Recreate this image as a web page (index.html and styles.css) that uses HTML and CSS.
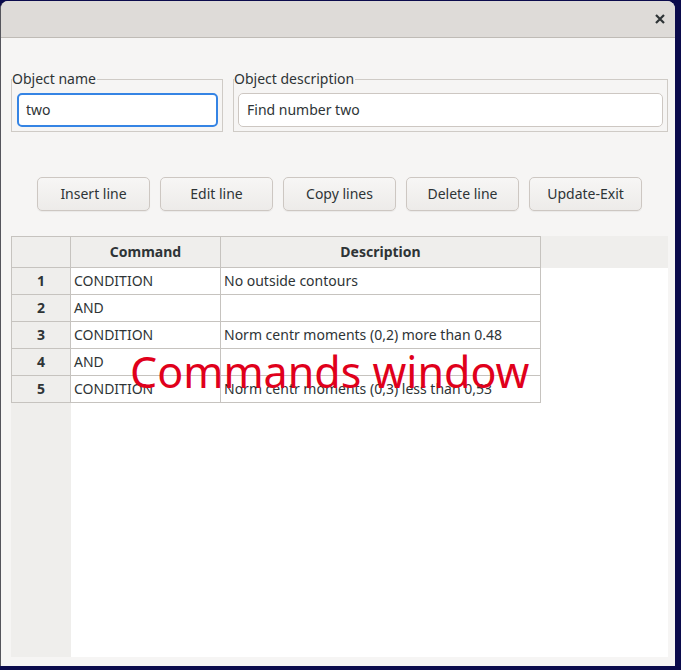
FILE: index.html
```html
<!DOCTYPE html>
<html lang="en">
<head>
<meta charset="utf-8">
<title>Object editor</title>
<link rel="stylesheet" href="styles.css">
</head>
<body>
<div class="window">
  <div class="titlebar">
    <button class="close" aria-label="Close">
      <svg width="10" height="10" viewBox="0 0 10 10"><path d="M1 1 L9 9 M9 1 L1 9" stroke="#2e3436" stroke-width="2.2" stroke-linecap="butt"/></svg>
    </button>
  </div>
  <div class="content">
    <div class="groups">
      <fieldset class="group group-name">
        <legend>Object name</legend>
        <input class="field focused" type="text" value="two">
      </fieldset>
      <fieldset class="group group-desc">
        <legend>Object description</legend>
        <input class="field" type="text" value="Find number two">
      </fieldset>
    </div>
    <div class="buttons">
      <button class="btn">Insert line</button>
      <button class="btn">Edit line</button>
      <button class="btn">Copy lines</button>
      <button class="btn">Delete line</button>
      <button class="btn">Update-Exit</button>
    </div>
    <div class="view">
      <table class="grid">
        <thead>
          <tr>
            <th class="rh"></th>
            <th class="cmd">Command</th>
            <th class="desc">Description</th>
            <th class="fill"></th>
          </tr>
        </thead>
        <tbody>
          <tr><th class="rh">1</th><td class="cmd">CONDITION</td><td class="desc">No outside contours</td><td class="fill"></td></tr>
          <tr><th class="rh">2</th><td class="cmd">AND</td><td class="desc"></td><td class="fill"></td></tr>
          <tr><th class="rh">3</th><td class="cmd">CONDITION</td><td class="desc">Norm centr moments (0,2) more than 0.48</td><td class="fill"></td></tr>
          <tr><th class="rh">4</th><td class="cmd">AND</td><td class="desc"></td><td class="fill"></td></tr>
          <tr><th class="rh">5</th><td class="cmd">CONDITION</td><td class="desc">Norm centr moments (0,3) less than 0,53</td><td class="fill"></td></tr>
        </tbody>
      </table>
      <div class="annotation">Commands window</div>
    </div>
  </div>
</div>
</body>
</html>
```

FILE: styles.css
```css
* { box-sizing: border-box; }

html, body {
  margin: 0;
  padding: 0;
}

body {
  background: #0b0b4c;
  width: 681px;
  height: 670px;
  overflow: hidden;
  font-family: "Noto Sans", "DejaVu Sans", sans-serif;
  font-size: 14px;
  color: #2e3436;
}

.window {
  width: 675px;
  height: 665px;
  margin-top: 1px;
  border-left: 1px solid #55555c;
  border-radius: 8px 8px 0 0;
  background: #f6f5f4;
  display: flex;
  flex-direction: column;
  overflow: hidden;
}

.titlebar {
  height: 37px;
  flex: none;
  background: #dedbd8;
  border-bottom: 1px solid #bfbbb6;
  display: flex;
  justify-content: flex-end;
  align-items: center;
  padding-right: 3px;
}

.close {
  width: 24px;
  height: 24px;
  border: 0;
  background: transparent;
  padding: 0;
  display: flex;
  align-items: center;
  justify-content: center;
}

.content {
  flex: 1;
  display: flex;
  flex-direction: column;
  padding: 33px 7px 9px 10px;
  min-height: 0;
}

.groups {
  display: flex;
  gap: 10px;
}

.group {
  margin: 0;
  border: 1px solid #cfcbc6;
  padding: 5px 4px 4px 5px;
  min-width: 0;
}

.group-name { width: 212px; }
.group-desc { width: 435px; padding-left: 4px; }

.group legend {
  padding: 0 1px 2px 0;
  margin-left: -5px;
  line-height: 15px;
  font-size: 14px;
  color: #2e3436;
}
.group-desc legend { margin-left: -4px; }

.field {
  display: block;
  width: 100%;
  height: 34px;
  border: 1px solid #cdc7c2;
  border-radius: 5px;
  background: #ffffff;
  font-family: "Noto Sans", "DejaVu Sans", sans-serif;
  font-size: 14px;
  color: #2e3436;
  padding: 0 8px 2px;
  outline: none;
}

.field.focused {
  border: 2px solid #3584e4;
  padding: 0 7px 2px;
}

.buttons {
  display: flex;
  gap: 10px;
  margin-top: 45px;
  padding-left: 26px;
}

.btn {
  width: 113px;
  height: 34px;
  border: 1px solid #cdc7c2;
  border-radius: 5px;
  background: linear-gradient(#f7f6f5, #edebe9);
  box-shadow: 0 1px 1px rgba(0, 0, 0, 0.05);
  font-family: "Noto Sans", "DejaVu Sans", sans-serif;
  font-size: 14px;
  color: #2e3436;
  padding: 0 0 2px;
}

.view {
  position: relative;
  margin-top: 25px;
  flex: 1;
  background: linear-gradient(to right, #efeeec 0 60px, #ffffff 60px);
  overflow: hidden;
}

.grid {
  table-layout: fixed;
  border-collapse: separate;
  border-spacing: 0;
  width: 657px;
}

.grid th,
.grid td {
  height: 27px;
  padding: 0 3px 2px;
  border-right: 1px solid #c6c3bf;
  border-bottom: 1px solid #c6c3bf;
  font-size: 14px;
  font-weight: normal;
  text-align: left;
  white-space: nowrap;
  overflow: visible;
  color: #2e3436;
}

.grid thead th {
  height: 32px;
  border-top: 1px solid #c6c3bf;
  background: #efeeec;
  font-weight: bold;
  text-align: center;
}

.grid .rh {
  width: 60px;
  border-left: 1px solid #c6c3bf;
  background: #efeeec;
  font-weight: bold;
  text-align: center;
}

.grid .cmd { width: 150px; }
.grid .desc { width: 320px; }

.grid .fill {
  width: 127px;
  border: 0;
  background: transparent;
}

.grid thead th.fill {
  border: 0;
  background: #efeeec;
}

.grid td.cmd,
.grid td.desc {
  background: #ffffff;
}

.annotation {
  position: absolute;
  left: 119px;
  top: 114px;
  font-family: "Noto Sans", "DejaVu Sans", sans-serif;
  font-size: 43px;
  line-height: 43px;
  color: #e0001b;
  white-space: nowrap;
  pointer-events: none;
}
```
